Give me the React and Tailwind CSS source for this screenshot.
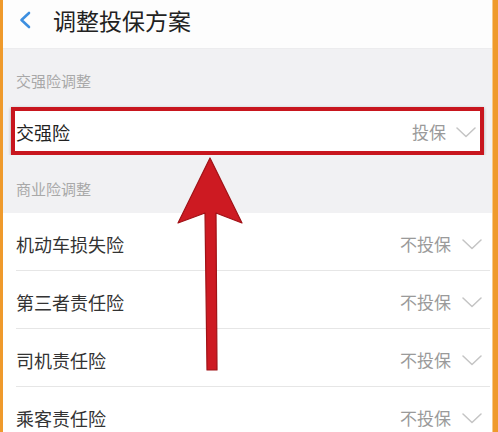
import React from "react";

const Chevron = () => (
  <svg width="20" height="11" viewBox="0 0 20 11" className="shrink-0">
    <path d="M1 1 L10 9.5 L19 1" fill="none" stroke="#c4c4c4" strokeWidth="1.5" strokeLinecap="round" strokeLinejoin="round" />
  </svg>
);

const Row = ({ label, value, divider }) => (
  <div className="relative h-[58px] shrink-0 flex items-center pl-[13px] pr-[10px] pt-[4px] bg-white">
    <span className="text-[18px] text-[#333] flex-1">{label}</span>
    <span className="text-[17px] text-[#9a9a9a] mr-[11px]">{value}</span>
    <Chevron />
    {divider && <div className="absolute bottom-0 left-[13px] right-[2px] h-px bg-[#e6e6e6]" />}
  </div>
);

export default function App() {
  return (
    <div
      className="w-[498px] h-[432px] overflow-hidden flex bg-white"
      style={{ fontFamily: '"Noto Sans CJK SC", "Noto Sans", sans-serif' }}
    >
      <div className="w-[3px] shrink-0 bg-[#ef9a2c]" />
      <div className="flex-1 relative flex flex-col">
        <div className="h-[48px] shrink-0 flex items-center pb-[8px] bg-[#fdfdfd]">
          <svg width="14" height="18" viewBox="0 0 14 18" className="ml-[15px]">
            <path d="M11 2 L3.5 9 L11 16" fill="none" stroke="#3d8fe0" strokeWidth="2.6" strokeLinecap="round" strokeLinejoin="round" />
          </svg>
          <span className="ml-[21px] text-[23px] text-[#222] leading-none">调整投保方案</span>
        </div>
        <div className="h-[59px] shrink-0 bg-[#f1f1f3] pl-[13px] pt-[22px] border-t border-[#ececee]">
          <span className="text-[15px] text-[#a8a8a8] leading-[20px] block">交强险调整</span>
        </div>
        <div className="shrink-0 bg-[#f1f1f3] px-[8px]">
          <div className="h-[48px] border-[4px] border-[#c8161e] bg-white flex items-center pl-[1px] pr-[4px] pt-[2px] shadow-[0_1px_3px_rgba(0,0,0,0.3)]">
            <span className="text-[18px] text-[#222] flex-1">交强险</span>
            <span className="text-[17px] text-[#9a9a9a] mr-[10px]">投保</span>
            <Chevron />
          </div>
        </div>
        <div className="h-[58px] shrink-0 bg-[#f1f1f3] pl-[13px] pt-[24px]">
          <span className="text-[15px] text-[#a8a8a8] leading-[20px] block">商业险调整</span>
        </div>
        <Row label="机动车损失险" value="不投保" divider />
        <Row label="第三者责任险" value="不投保" divider />
        <Row label="司机责任险" value="不投保" divider />
        <Row label="乘客责任险" value="不投保" />
        <svg className="absolute left-0 top-0 pointer-events-none" width="495" height="432" viewBox="0 0 495 432">
          <path
            d="M207 158 L239 223 L213 213 L214 370 L204 370 L202 213 L175 223 Z"
            fill="#cd1a22"
            stroke="#a01217"
            strokeWidth="1.2"
            strokeLinejoin="round"
          />
        </svg>
      </div>
      <div className="w-[6px] shrink-0 bg-[#ef9a2c] border-l border-[#f7c98a]" />
    </div>
  );
}
